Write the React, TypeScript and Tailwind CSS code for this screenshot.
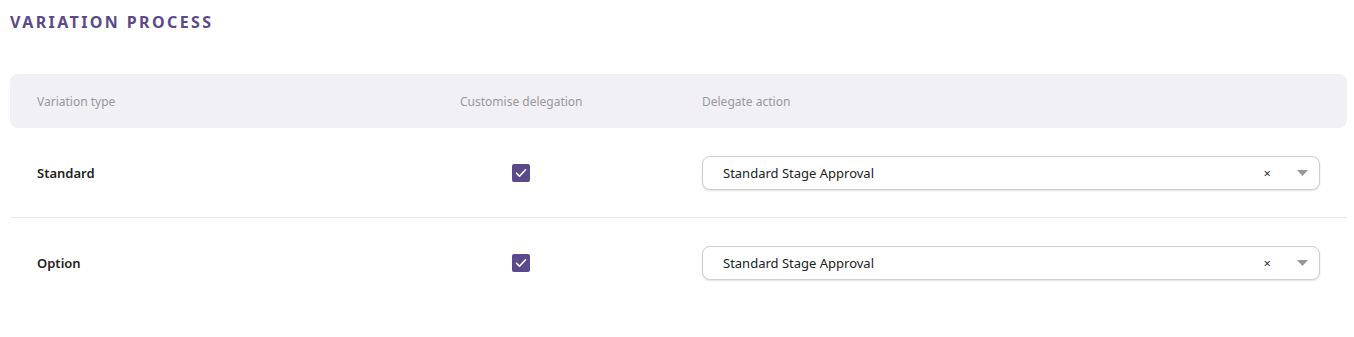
import React from "react";

const rows = ["Standard", "Option"];

function Check() {
  return (
    <div className="ml-[52px] flex h-[18px] w-[18px] items-center justify-center rounded-[2px] bg-[#5b4a8b]">
      <svg width="12" height="10" viewBox="0 0 12 10" fill="none">
        <path d="M1.5 5.2L4.5 8.2L10.5 1.8" stroke="white" strokeWidth="1.6" strokeLinecap="round" strokeLinejoin="round" />
      </svg>
    </div>
  );
}

function Select() {
  return (
    <div className="flex h-[34px] items-center rounded-[8px] border border-[#cfcfcf] bg-white pl-[20px] pr-[11px] shadow-[0_1px_2px_rgba(0,0,0,0.12)]">
      <span className="flex-1 pt-[1px] text-[13px] text-[#222]">Standard Stage Approval</span>
      <span className="mr-[26px] text-[13px] leading-none text-[#333]">×</span>
      <svg width="11" height="6" viewBox="0 0 11 6">
        <path d="M0 0H11L5.5 6Z" fill="#999" />
      </svg>
    </div>
  );
}

export default function App() {
  return (
    <div className="min-h-[337px] bg-white pl-[10px] pr-[7px] pt-[12px]" style={{ fontFamily: "'Noto Sans', sans-serif" }}>
      <h1 className="text-[16px] font-bold leading-[20px] tracking-[0.15em] text-[#5b4a8b]">VARIATION PROCESS</h1>
      <div className="mt-[42px] grid h-[54px] grid-cols-[423px_242px_1fr] items-center rounded-[8px] bg-[#f1f0f5] px-[27px] pt-[2px] text-[12px] text-[#999]">
        <div>Variation type</div>
        <div>Customise delegation</div>
        <div>Delegate action</div>
      </div>
      {rows.map((r, i) => (
        <div
          key={r}
          className={
            "grid grid-cols-[423px_242px_1fr] items-center px-[27px] pt-[28px] pb-[27px] " +
            (i === 0 ? "border-b border-[#ebebeb]" : "")
          }
        >
          <div className="pt-[2px] text-[13px] font-semibold text-[#222]">{r}</div>
          <Check />
          <Select />
        </div>
      ))}
    </div>
  );
}
